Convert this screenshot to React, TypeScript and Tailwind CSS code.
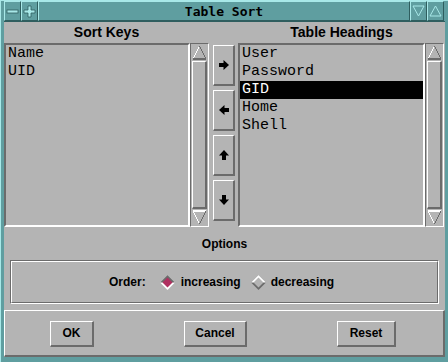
import React from 'react'

const sans = { fontFamily: '"Liberation Sans", Arial, sans-serif' }
const mono = { fontFamily: '"Liberation Mono", "Courier New", monospace' }

const Tri = ({ dir }: { dir: 'up' | 'down' }) => (
  <svg width="15" height="15" viewBox="0 0 15 15" shapeRendering="crispEdges" className="mx-auto block">
    {dir === 'up' ? (
      <>
        <polygon points="7.5,1.5 13.5,13.5 1.5,13.5" fill="#b4b4b4" />
        <line x1="7.5" y1="1" x2="1" y2="14" stroke="#ffffff" strokeWidth="1.2" />
        <line x1="7.5" y1="1" x2="14" y2="14" stroke="#6b6b6b" strokeWidth="1.2" />
        <line x1="1" y1="14" x2="14" y2="14" stroke="#6b6b6b" strokeWidth="1.2" />
      </>
    ) : (
      <>
        <polygon points="1.5,1.5 13.5,1.5 7.5,13.5" fill="#b4b4b4" />
        <line x1="1" y1="1" x2="14" y2="1" stroke="#ffffff" strokeWidth="1.2" />
        <line x1="1" y1="1" x2="7.5" y2="14" stroke="#ffffff" strokeWidth="1.2" />
        <line x1="14" y1="1" x2="7.5" y2="14" stroke="#6b6b6b" strokeWidth="1.2" />
      </>
    )}
  </svg>
)

const ScrollBar = () => (
  <div className="flex w-[19px] flex-col border border-t-[#6b6b6b] border-l-[#6b6b6b] border-b-white border-r-white p-px">
    <Tri dir="up" />
    <div className="my-px flex-1 border-t border-l border-t-white border-l-white border-b-2 border-r-2 border-b-[#6b6b6b] border-r-[#6b6b6b]" />
    <Tri dir="down" />
  </div>
)

const Arrow = ({ dir }: { dir: 'right' | 'left' | 'up' | 'down' }) => {
  const rot = { right: 0, down: 90, left: 180, up: 270 }[dir]
  return (
    <svg width="12" height="12" viewBox="0 0 12 12">
      <g transform={`rotate(${rot} 6 6)`} fill="#000">
        <rect x="1" y="4" width="6" height="4" />
        <polygon points="5.5,1 11,6 5.5,11" />
      </g>
    </svg>
  )
}

const MoveButton = ({ dir }: { dir: 'right' | 'left' | 'up' | 'down' }) => (
  <div className="flex h-[41px] w-[22px] items-center justify-center border-t border-l border-t-white border-l-white border-b-2 border-r-2 border-b-[#6b6b6b] border-r-[#6b6b6b]">
    <Arrow dir={dir} />
  </div>
)

const ListBox = ({ items, selected, width }: { items: string[]; selected?: number; width: string }) => (
  <div className={`${width} border-2 border-t-[#6b6b6b] border-l-[#6b6b6b] border-b-white border-r-white`}>
    {items.map((it, i) => (
      <div
        key={it}
        style={mono}
        className={`h-[18px] pl-[2px] text-[15px] leading-[18px] ${i === selected ? 'bg-black text-white' : 'text-black'}`}
      >
        {it}
      </div>
    ))}
  </div>
)

const Diamond = ({ on }: { on: boolean }) => (
  <svg width="15" height="15" viewBox="0 0 15 15">
    <polygon points="7.5,0 15,7.5 7.5,15 0,7.5" fill={on ? '#ffffff' : '#6b6b6b'} />
    <polygon points="0,7.5 7.5,0 15,7.5" fill={on ? '#6b6b6b' : '#ffffff'} />
    <polygon points="7.5,2.5 12.5,7.5 7.5,12.5 2.5,7.5" fill={on ? '#b03060' : '#b4b4b4'} />
  </svg>
)

const PushButton = ({ label, w, ml }: { label: string; w: string; ml: string }) => (
  <div
    style={sans}
    className={`${w} ${ml} flex h-[26px] items-center justify-center border-t border-l border-t-white border-l-white border-b-2 border-r-2 border-b-[#6b6b6b] border-r-[#6b6b6b] text-[12px] font-bold text-black`}
  >
    {label}
  </div>
)

const TitleBox = ({ children, w }: { children?: React.ReactNode; w: string }) => (
  <div className={`${w} flex items-center justify-center border-t border-l border-t-[#a8e8e8] border-l-[#a8e8e8] border-b border-r border-b-[#2f5e5f] border-r-[#2f5e5f]`}>
    {children}
  </div>
)

export default function App() {
  return (
    <div className="flex h-[362px] w-[448px] flex-col bg-[#5f9ea0] border-t border-l border-t-[#a8e8e8] border-l-[#a8e8e8]">
      {/* title bar */}
      <div className="flex h-[20px] items-stretch pl-[3px] pr-[4px]">
        <TitleBox w="w-[17px]">
          <svg width="13" height="5" viewBox="0 0 13 5">
            <rect x="1" y="1" width="11" height="3" fill="#a8e8e8" stroke="#2f5e5f" strokeWidth="0.8" />
          </svg>
        </TitleBox>
        <TitleBox w="w-[17px]">
          <svg width="13" height="13" viewBox="0 0 13 13">
            <path d="M5 1h3v4h4v3H8v4H5V8H1V5h4z" fill="#a8e8e8" stroke="#2f5e5f" strokeWidth="0.8" />
          </svg>
        </TitleBox>
        <TitleBox w="flex-1">
          <span
            style={{ fontFamily: '"DejaVu Sans Mono", "Liberation Mono", monospace' }}
            className="text-[13px] font-bold leading-none text-black"
          >
            Table Sort
          </span>
        </TitleBox>
        <TitleBox w="w-[17px]">
          <svg width="13" height="12" viewBox="0 0 13 12">
            <polygon points="1,1 12,1 6.5,11" fill="none" stroke="#a8e8e8" strokeWidth="1" />
          </svg>
        </TitleBox>
        <TitleBox w="w-[17px]">
          <svg width="13" height="12" viewBox="0 0 13 12">
            <polygon points="6.5,1 12,11 1,11" fill="none" stroke="#a8e8e8" strokeWidth="1" />
          </svg>
        </TitleBox>
      </div>

      <div className="mx-[3px] mb-[5px] flex flex-1 flex-col bg-[#b4b4b4] border-t border-t-[#2f5e5f]">
        {/* headers */}
        <div className="flex h-[21px] items-center" style={sans}>
          <div className="w-[205px] text-center text-[14px] font-bold text-black">Sort Keys</div>
          <div className="w-[29px]" />
          <div className="flex-1 text-center text-[14px] font-bold text-black">Table Headings</div>
        </div>

        {/* lists */}
        <div className="flex h-[184px]">
          <ListBox items={['Name', 'UID']} width="w-[186px]" />
          <ScrollBar />
          <div className="ml-[4px] mr-[3px] flex flex-col gap-[4px] pt-[2px]">
            <MoveButton dir="right" />
            <MoveButton dir="left" />
            <MoveButton dir="up" />
            <MoveButton dir="down" />
          </div>
          <ListBox items={['User', 'Password', 'GID', 'Home', 'Shell']} selected={2} width="w-[187px]" />
          <ScrollBar />
        </div>

        {/* options */}
        <div style={sans} className="flex h-[33px] items-center justify-center text-[12px] font-bold text-black">
          Options
        </div>
        <div className="mx-[6px] h-[44px] border border-t-[#6b6b6b] border-l-[#6b6b6b] border-b-white border-r-white">
          <div
            style={sans}
            className="flex h-full items-center justify-center border border-t-white border-l-white border-b-[#6b6b6b] border-r-[#6b6b6b] pr-[6px] text-[12px] font-bold text-black"
          >
            <span>Order:</span>
            <span className="ml-[14px] flex"><Diamond on /></span>
            <span className="ml-[6px]">increasing</span>
            <span className="ml-[10px] flex"><Diamond on={false} /></span>
            <span className="ml-[5px]">decreasing</span>
          </div>
        </div>

        {/* action buttons */}
        <div className="mt-[6px] flex flex-1 items-center border-t border-l border-t-white border-l-white border-b-2 border-r-2 border-b-[#6b6b6b] border-r-[#6b6b6b] pt-[1px]">
          <PushButton label="OK" w="w-[44px]" ml="ml-[45px]" />
          <PushButton label="Cancel" w="w-[63px]" ml="ml-[90px]" />
          <PushButton label="Reset" w="w-[59px]" ml="ml-[90px]" />
        </div>
      </div>
    </div>
  )
}
